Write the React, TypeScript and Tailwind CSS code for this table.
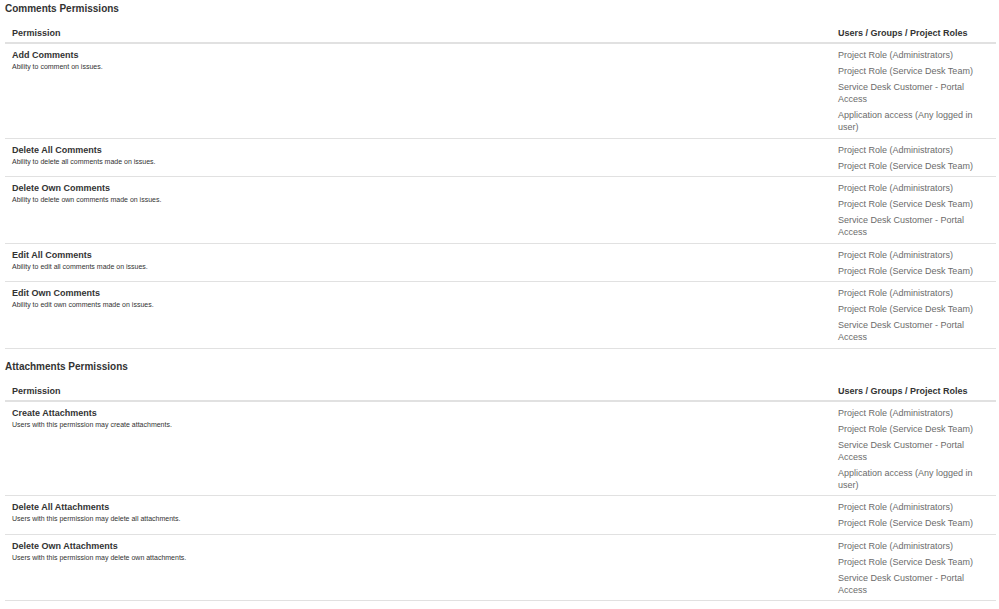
import React from "react";

type Perm = { name: string; desc: string; grants: string[] };

const ADMIN = "Project Role (Administrators)";
const TEAM = "Project Role (Service Desk Team)";
const CUSTOMER = "Service Desk Customer - Portal Access";
const APP = "Application access (Any logged in user)";

const sections: { title: string; perms: Perm[] }[] = [
  {
    title: "Comments Permissions",
    perms: [
      { name: "Add Comments", desc: "Ability to comment on issues.", grants: [ADMIN, TEAM, CUSTOMER, APP] },
      { name: "Delete All Comments", desc: "Ability to delete all comments made on issues.", grants: [ADMIN, TEAM] },
      { name: "Delete Own Comments", desc: "Ability to delete own comments made on issues.", grants: [ADMIN, TEAM, CUSTOMER] },
      { name: "Edit All Comments", desc: "Ability to edit all comments made on issues.", grants: [ADMIN, TEAM] },
      { name: "Edit Own Comments", desc: "Ability to edit own comments made on issues.", grants: [ADMIN, TEAM, CUSTOMER] },
    ],
  },
  {
    title: "Attachments Permissions",
    perms: [
      { name: "Create Attachments", desc: "Users with this permission may create attachments.", grants: [ADMIN, TEAM, CUSTOMER, APP] },
      { name: "Delete All Attachments", desc: "Users with this permission may delete all attachments.", grants: [ADMIN, TEAM] },
      { name: "Delete Own Attachments", desc: "Users with this permission may delete own attachments.", grants: [ADMIN, TEAM, CUSTOMER] },
    ],
  },
];

function Section({ title, perms, first }: { title: string; perms: Perm[]; first: boolean }) {
  return (
    <section className={first ? "pt-[1px]" : "mt-[10px]"}>
      <h2 className="pl-[5px] text-[10px] leading-[16px] font-bold text-[#333]">{title}</h2>
      <div className="mt-[6px] mx-[5px] w-[991px]">
        <div className="flex border-b-2 border-[#e1e1e1] pt-[4px] pb-[3px] text-[9px] leading-[12px] font-bold text-[#333]">
          <div className="flex-1 px-[7px]">Permission</div>
          <div className="w-[165px] px-[7px]">Users / Groups / Project Roles</div>
        </div>
        {perms.map((p) => (
          <div key={p.name} className="flex border-b border-[#e1e1e1] pt-[3px] pb-[2.5px]">
            <div className="flex-1 px-[7px]">
              <div className="mt-[2px] text-[9px] leading-[12px] font-bold text-[#333]">{p.name}</div>
              <div className="mt-[1px] text-[7px] leading-[10px] text-[#333]">{p.desc}</div>
            </div>
            <ul className="w-[165px] px-[7px] text-[9px] leading-[12px] text-[#6b6b6b]">
              {p.grants.map((g) => (
                <li key={g} className="py-[2px]">{g}</li>
              ))}
            </ul>
          </div>
        ))}
      </div>
    </section>
  );
}

export default function App() {
  return (
    <div className="w-[999px] h-[609px] overflow-hidden bg-white" style={{ fontFamily: '"Liberation Sans", Arial, sans-serif' }}>
      {sections.map((s, i) => (
        <Section key={s.title} title={s.title} perms={s.perms} first={i === 0} />
      ))}
    </div>
  );
}
